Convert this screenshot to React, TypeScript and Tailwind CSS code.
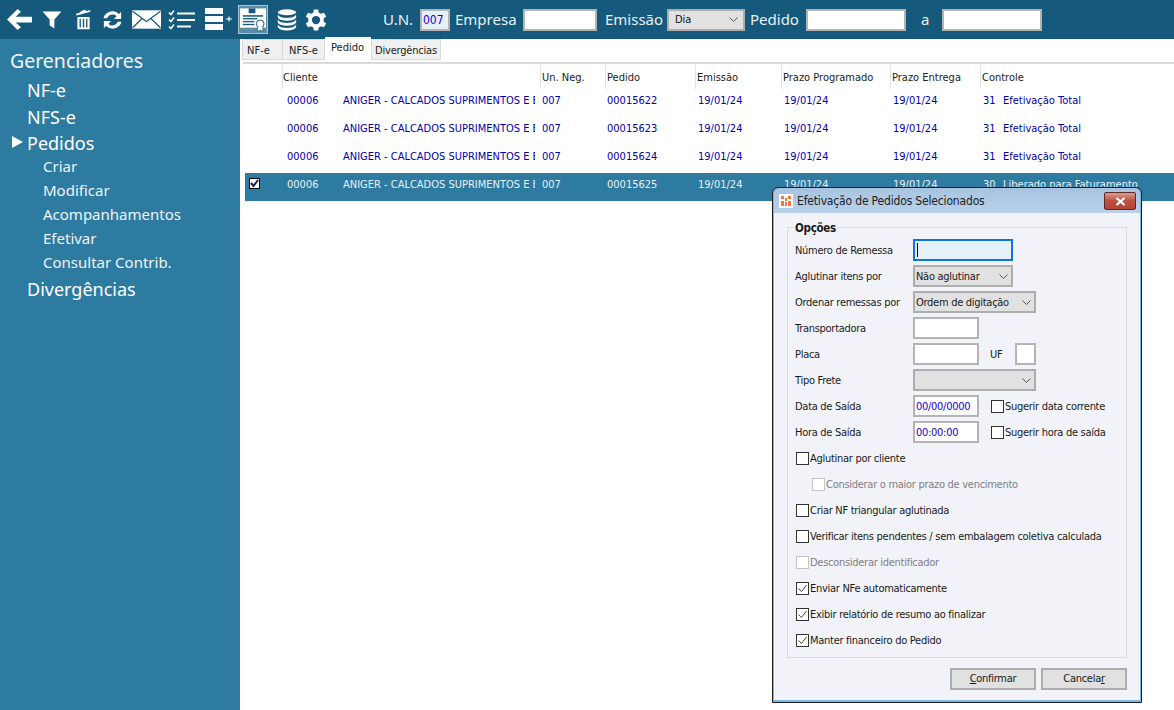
import React from "react";

const font = { fontFamily: '"Noto Sans", Tahoma, sans-serif' };
const small = { fontFamily: '"DejaVu Sans Condensed", "DejaVu Sans", sans-serif', fontStretch: "condensed" as const };

function Icons() {
  return (
    <div className="flex items-center h-full text-white">
      <svg width="27" height="23" viewBox="0 0 28 24" className="ml-[6px]"><path d="M12 1 L1 12 L12 23 L15.5 20 L10 15 L27 15 L27 9 L10 9 L15.5 4 Z" fill="#fff"/></svg>
      <svg width="20" height="19" viewBox="0 0 20 20" className="ml-[9px]"><path d="M0 1.5 H20 L12.5 10 V19.5 L7.5 16 V10 Z" fill="#fff"/></svg>
      <svg width="17" height="21" viewBox="0 0 18 24" className="ml-[13px]"><path d="M6 2.5 L11 0.5 L12 2.5 L16.5 1 L17 3 L1 7.5 L0.5 5.5 L5 4 Z" fill="#fff"/><path d="M2 9 H16 V23 H2 Z M4.5 11 V21 H6 V11 Z M8.2 11 V21 H9.8 V11 Z M12 11 V21 H13.5 V11 Z" fill="#fff" fillRule="evenodd"/></svg>
      <svg width="21" height="20" viewBox="0 0 22 22" className="ml-[10px]"><path d="M11 1.5 C14 1.5 16.5 2.7 18 4.6 L20.5 2 V10 H12.5 L15.5 7 C14.5 5.7 13 5 11 5 C8 5 6 6.7 5.3 9 H1.2 C2 4.7 6.2 1.5 11 1.5 Z M11 20.5 C8 20.5 5.5 19.3 4 17.4 L1.5 20 V12 H9.5 L6.5 15 C7.5 16.3 9 17 11 17 C14 17 16 15.3 16.7 13 H20.8 C20 17.3 15.8 20.5 11 20.5 Z" fill="#fff"/></svg>
      <svg width="29" height="19" viewBox="0 0 30 19" className="ml-[9px]"><rect width="30" height="19" fill="#fff"/><path d="M0.5 1 L15 11.5 L29.5 1 M0.5 18 L10.5 8.5 M29.5 18 L19.5 8.5" fill="none" stroke="#155a7c" strokeWidth="1.3"/></svg>
      <svg width="27" height="20" viewBox="0 0 27 20" className="ml-[7px]"><g fill="none" stroke="#fff" strokeWidth="1.5"><path d="M1 2.5 L3 4.5 L6 0.5"/><path d="M1 9.5 L3 11.5 L6 7.5"/><path d="M1 16.5 L3 18.5 L6 14.5"/></g><rect x="9" y="2.5" width="18" height="2" fill="#fff"/><rect x="9" y="9" width="18" height="2" fill="#fff"/><rect x="9" y="15.5" width="14" height="2" fill="#fff"/></svg>
      <svg width="27" height="23" viewBox="0 0 27 23" className="ml-[10px]"><rect x="0" y="0" width="18" height="6" fill="#fff"/><rect x="0" y="8" width="18" height="6" fill="#fff"/><rect x="0" y="16" width="18" height="6" fill="#fff"/><path d="M21 11 h6 M24 8.5 v5" stroke="#fff" strokeWidth="1.2"/></svg>
      <div className="ml-[6px] w-[30px] h-[29px] bg-[#5d8ba5] border border-[#a9c4d3] flex items-center justify-center">
        <svg width="26" height="25" viewBox="0 0 27 25"><rect x="0" y="1" width="27" height="20" fill="#fff"/><rect x="9" y="1" width="7" height="5" fill="#155a7c"/><g fill="#155a7c"><rect x="3" y="8" width="21" height="1.6"/><rect x="3" y="11" width="15" height="1.4"/><rect x="3" y="14" width="12" height="1.4"/><rect x="3" y="17" width="12" height="1.4"/></g><circle cx="21" cy="17" r="4" fill="#fff" stroke="#155a7c"/><path d="M18.5 20 L18 25 L21 23.5 L24 25 L23.5 20" fill="#fff" stroke="#155a7c" strokeWidth="0.7"/></svg>
      </div>
      <svg width="21" height="22" viewBox="0 0 21 24" className="ml-[8px]"><ellipse cx="11" cy="3.5" rx="10" ry="3.2" fill="#fff"/><path d="M1 6 C3 9 6 9.7 11 9.7 C16 9.7 19 9 21 6 V9.5 C19 12 16 12.8 11 12.8 C6 12.8 3 12 1 9.5 Z" fill="#fff"/><path d="M1 11.5 C3 14.5 6 15.2 11 15.2 C16 15.2 19 14.5 21 11.5 V15 C19 17.5 16 18.3 11 18.3 C6 18.3 3 17.5 1 15 Z" fill="#fff"/><path d="M1 17 C3 20 6 20.7 11 20.7 C16 20.7 19 20 21 17 V20 C19 22.5 16 23.5 11 23.5 C6 23.5 3 22.5 1 20 Z" fill="#fff"/></svg>
      <svg width="22" height="22" viewBox="0 0 24 24" className="ml-[8px]"><path fillRule="evenodd" fill="#fff" d="M9.6 0.5 H14.4 L15 4 C15.9 4.3 16.7 4.7 17.4 5.3 L20.7 4 L23.1 8.1 L20.3 10.4 C20.5 11.4 20.5 12.6 20.3 13.6 L23.1 15.9 L20.7 20 L17.4 18.7 C16.7 19.3 15.9 19.7 15 20 L14.4 23.5 H9.6 L9 20 C8.1 19.7 7.3 19.3 6.6 18.7 L3.3 20 L0.9 15.9 L3.7 13.6 C3.5 12.6 3.5 11.4 3.7 10.4 L0.9 8.1 L3.3 4 L6.6 5.3 C7.3 4.7 8.1 4.3 9 4 Z M12 7.5 A4.5 4.5 0 1 0 12 16.5 A4.5 4.5 0 1 0 12 7.5 Z"/></svg>
    </div>
  );
}

function Chevron() {
  return (
    <svg width="9" height="5" viewBox="0 0 9 5"><path d="M0.5 0.5 L4.5 4.5 L8.5 0.5" fill="none" stroke="#555" strokeWidth="1"/></svg>
  );
}

const headers: [string, string][] = [
  ["", "w-[37px]"],
  ["Cliente", "w-[258px]"],
  ["Un. Neg.", "w-[65px]"],
  ["Pedido", "w-[90px]"],
  ["Emissão", "w-[86px]"],
  ["Prazo Programado", "w-[109px]"],
  ["Prazo Entrega", "w-[90px]"],
  ["Controle", "flex-1"],
];

function Row({ num, selected, code, status }: { num: string; selected?: boolean; code: string; status: string }) {
  return (
    <div className={`flex h-[28px] pt-[5px] text-[11px] leading-[14px] whitespace-nowrap ${selected ? "bg-[#2e7ba2] text-[#e8f0f5]" : "text-[#0000a8]"}`}>
      <div className="w-[37px] pl-[4px]">
        {selected && (
          <div className="w-[11px] h-[11px] border border-black bg-white flex items-center justify-center">
            <svg width="9" height="9" viewBox="0 0 9 9"><path d="M1 4 L3.5 7 L8 1" fill="none" stroke="#111c55" strokeWidth="2"/></svg>
          </div>
        )}
      </div>
      <div className="w-[61px] pl-[5px]">00006</div>
      <div className="w-[197px]"><div className="w-[192px] overflow-hidden">ANIGER - CALCADOS SUPRIMENTOS E E</div></div>
      <div className="w-[65px] pl-[2px]">007</div>
      <div className="w-[90px] pl-[2px]">{num}</div>
      <div className="w-[86px] pl-[3px]">19/01/24</div>
      <div className="w-[109px] pl-[3px]">19/01/24</div>
      <div className="w-[90px] pl-[3px]">19/01/24</div>
      <div className="flex-1 pl-[3px] flex"><span className="w-[20px]">{code}</span><span>{status}</span></div>
    </div>
  );
}

function Field({ label, children }: { label: string; children: React.ReactNode }) {
  return (
    <div className="flex items-center h-[26px] whitespace-nowrap">
      <span className="w-[125px] pl-[7px] pt-[1px] shrink-0">{label}</span>
      {children}
    </div>
  );
}

const inputBase = "h-[22px] border-2 border-[#b4b4b4] bg-white";

function Combo({ w, text }: { w: string; text?: string }) {
  return (
    <div className={`h-[22px] ${w} border-2 border-[#adadad] bg-[#e1e1e1] flex items-center justify-between pl-[1px] pr-[3px]`}>
      <span className="pt-[1px]">{text}</span>
      <Chevron />
    </div>
  );
}

function Check({ checked, disabled, label, indent }: { checked?: boolean; disabled?: boolean; label: string; indent?: string }) {
  return (
    <div className={`flex items-center h-[26px] whitespace-nowrap ${indent ?? "pl-[8px]"} ${disabled ? "text-[#7f8086]" : ""}`}>
      <Box checked={checked} disabled={disabled} />
      <span className="ml-[1px] pt-[1px]">{label}</span>
    </div>
  );
}

function Box({ checked, disabled }: { checked?: boolean; disabled?: boolean }) {
  return (
    <div className={`w-[13px] h-[13px] border ${disabled ? "border-[#c4c4c4]" : "border-[#333]"} bg-white flex items-center justify-center shrink-0`}>
      {checked && <svg width="11" height="11" viewBox="0 0 11 11"><path d="M1.5 5.5 L4.5 8.5 L9.5 2" fill="none" stroke="#444" strokeWidth="1"/></svg>}
    </div>
  );
}

function LogoMark() {
  return (
    <div className="w-[14px] h-[14px] bg-white flex items-center justify-center shrink-0">
      <svg width="10" height="10" viewBox="0 0 10 10"><path d="M0 0 H3 V3 H0 Z M4 2 H6 V5 H4 Z M7 0 H10 V3 H7 Z M0 5 H3 V10 H0 Z M4 6 H6 V10 H4 Z M7 5 H10 V10 H7 Z" fill="#f0793a"/></svg>
    </div>
  );
}

function Dialog() {
  return (
    <div className="absolute left-[772px] top-[187px] w-[370px] h-[516px] border border-[#1b1b1b] rounded-t-[6px] bg-[#7fb6dc] text-[11px] leading-[14px] tracking-[-0.28px] text-[#1a1a1a] p-[1px] pt-0 pb-[2px] flex flex-col" style={small}>
      <div className="h-[25px] rounded-t-[6px] bg-gradient-to-b from-[#a8c3e0] to-[#b9d3ec] flex items-center pl-[5px] shrink-0 relative">
        <LogoMark />
        <span className="ml-[4px] pt-[1px] text-[#222] text-[12px] tracking-[-0.17px]">Efetivação de Pedidos Selecionados</span>
        <div className="absolute right-[4px] top-[4px] w-[32px] h-[18px] border border-[#5a2a2a] rounded-[2px] bg-gradient-to-b from-[#d99a8c] via-[#c04f3f] to-[#b8423a] flex items-center justify-center">
          <svg width="11" height="9" viewBox="0 0 11 9"><path d="M1.5 1 L9.5 8 M9.5 1 L1.5 8" stroke="#fff" strokeWidth="2.2"/></svg>
        </div>
      </div>
      <div className="flex-1 bg-[#f1f3f9] px-[13px] pt-[14px] relative">
        <div className="border border-[#d9dbdf] h-[431px] pt-[9px]">
          <div className="absolute left-[20px] top-[8px] bg-[#f1f3f9] px-[1px] font-bold text-[11.5px]">Opções</div>
          <Field label="Número de Remessa">
            <div className="h-[22px] w-[100px] border-2 border-[#0a78d7] bg-[#e6f0fb] flex items-center pl-[2px]"><div className="w-px h-[14px] bg-black" /></div>
          </Field>
          <Field label="Aglutinar itens por"><Combo w="w-[100px]" text="Não aglutinar" /></Field>
          <Field label="Ordenar remessas por"><Combo w="w-[123px]" text="Ordem de digitação" /></Field>
          <Field label="Transportadora"><div className={`${inputBase} w-[66px]`} /></Field>
          <Field label="Placa">
            <div className={`${inputBase} w-[66px]`} />
            <span className="ml-[11px] w-[25px] pt-[1px]">UF</span>
            <div className={`${inputBase} w-[21px]`} />
          </Field>
          <Field label="Tipo Frete"><Combo w="w-[123px]" /></Field>
          <Field label="Data de Saída">
            <div className={`${inputBase} w-[66px] flex items-center pl-[1px] pt-[1px] text-[#1a00c8]`}>00/00/0000</div>
            <div className="ml-[12px]"><Box /></div>
            <span className="ml-[1px] pt-[1px]">Sugerir data corrente</span>
          </Field>
          <Field label="Hora de Saída">
            <div className={`${inputBase} w-[66px] flex items-center pl-[1px] pt-[1px] text-[#1a00c8]`}>00:00:00</div>
            <div className="ml-[12px]"><Box /></div>
            <span className="ml-[1px] pt-[1px]">Sugerir hora de saída</span>
          </Field>
          <Check label="Aglutinar por cliente" />
          <Check label="Considerar o maior prazo de vencimento" disabled indent="pl-[24px]" />
          <Check label="Criar NF triangular aglutinada" />
          <Check label="Verificar itens pendentes / sem embalagem coletiva calculada" />
          <Check label="Desconsiderar identificador" disabled />
          <Check label="Enviar NFe automaticamente" checked />
          <Check label="Exibir relatório de resumo ao finalizar" checked />
          <Check label="Manter financeiro do Pedido" checked />
        </div>
        <div className="flex justify-end gap-[5px] mt-[10px]">
          <button className="w-[86px] h-[22px] border-2 border-[#adadad] bg-[#e1e1e1] text-[#1a1a1a]"><span className="underline">C</span>onfirmar</button>
          <button className="w-[86px] h-[22px] border-2 border-[#adadad] bg-[#e1e1e1] text-[#1a1a1a]">Cancela<span className="underline">r</span></button>
        </div>
      </div>
    </div>
  );
}

export default function App() {
  return (
    <div className="relative w-[1174px] h-[710px] overflow-hidden flex flex-col bg-white" style={font}>
      <header className="h-[39px] bg-[#155a7c] flex items-center shrink-0 text-[#e8f0f5] text-[15px]">
        <Icons />
        <div className="flex items-center ml-[56px]">
          <span className="w-[37px]">U.N.</span>
          <div className="w-[30px] h-[22px] bg-[#e6f0fb] border-2 border-[#b4b4b4] text-[#1a00c8] text-[12px] flex items-center pl-[1px] pt-[1px]" style={small}>007</div>
          <span className="ml-[5px] w-[68px]">Empresa</span>
          <div className="w-[74px] h-[22px] bg-white border-2 border-[#b4b4b4]" />
          <span className="ml-[8px] w-[62px]">Emissão</span>
          <div className="w-[78px] h-[22px] bg-[#e1e1e1] border-2 border-[#adadad] text-[#111] text-[11px] flex items-center justify-between pl-[6px] pr-[5px]" style={small}><span className="pt-[1px]">Dia</span><Chevron /></div>
          <span className="ml-[5px] w-[56px]">Pedido</span>
          <div className="w-[100px] h-[22px] bg-white border-2 border-[#b4b4b4]" />
          <span className="ml-[15px] w-[21px]">a</span>
          <div className="w-[100px] h-[22px] bg-white border-2 border-[#b4b4b4]" />
        </div>
      </header>
      <div className="flex flex-1 min-h-0">
        <aside className="w-[240px] bg-[#2e7ba2] text-white shrink-0 relative">
          <div className="pl-[10px] pt-[8px] text-[19.5px] leading-[27px] text-[#f2f6f9]">Gerenciadores</div>
          <div className="pl-[27px] pt-[3px] text-[18px]">
            <div className="h-[27px] leading-[27px]">NF-e</div>
            <div className="h-[26px] leading-[26px]">NFS-e</div>
            <div className="h-[27px] leading-[27px] relative">
              <svg width="11" height="12" viewBox="0 0 11 12" className="absolute left-[-15px] top-[6px]"><path d="M0 0 L11 6 L0 12 Z" fill="#fff"/></svg>
              Pedidos
            </div>
          </div>
          <div className="pl-[43px] text-[15px] text-[#eef4f8] -mt-[3px]">
            {["Criar", "Modificar", "Acompanhamentos", "Efetivar", "Consultar Contrib."].map((t) => (
              <div key={t} className="h-[24px] leading-[24px]">{t}</div>
            ))}
          </div>
          <div className="pl-[27px] text-[18px] h-[30px] leading-[30px]">Divergências</div>
        </aside>
        <main className="flex-1 min-w-0 pl-[2px] text-[11px]" style={small}>
          <div className="flex h-[21px] items-end text-[#1a1a1a]">
            <div className="w-[41px] h-[21px] bg-[#f0f0f0] border border-[#d9d9d9] flex items-center pl-[4px] pt-[3px]">NF-e</div>
            <div className="w-[42px] h-[21px] bg-[#f0f0f0] border border-l-0 border-[#d9d9d9] flex items-center pl-[6px] pt-[3px]">NFS-e</div>
            <div className="w-[46px] h-[23px] bg-white flex items-center pl-[6px] pb-[1px]">Pedido</div>
            <div className="w-[70px] h-[21px] bg-[#f0f0f0] border border-[#d9d9d9] flex items-center pl-[3px] pt-[3px] tracking-[-0.2px]">Divergências</div>
          </div>
          <div className="h-[2px] mt-[2px] ml-[1px] bg-[#d9d9d9]" />
          <div className="ml-[3px]">
            <div className="flex h-[24px] mt-[1px] text-[#222] items-center">
              {headers.map(([h, w], i) => (
                <div key={i} className={`${w} h-full flex items-center pt-[2px] ${i > 0 ? "border-l border-[#e3e3e3]" : ""} ${i > 1 ? "pl-[1px]" : ""}`}>{h}</div>
              ))}
            </div>
            <Row num="00015622" code="31" status="Efetivação Total" />
            <Row num="00015623" code="31" status="Efetivação Total" />
            <Row num="00015624" code="31" status="Efetivação Total" />
            <Row num="00015625" code="30" status="Liberado para Faturamento" selected />
          </div>
        </main>
      </div>
      <Dialog />
    </div>
  );
}
